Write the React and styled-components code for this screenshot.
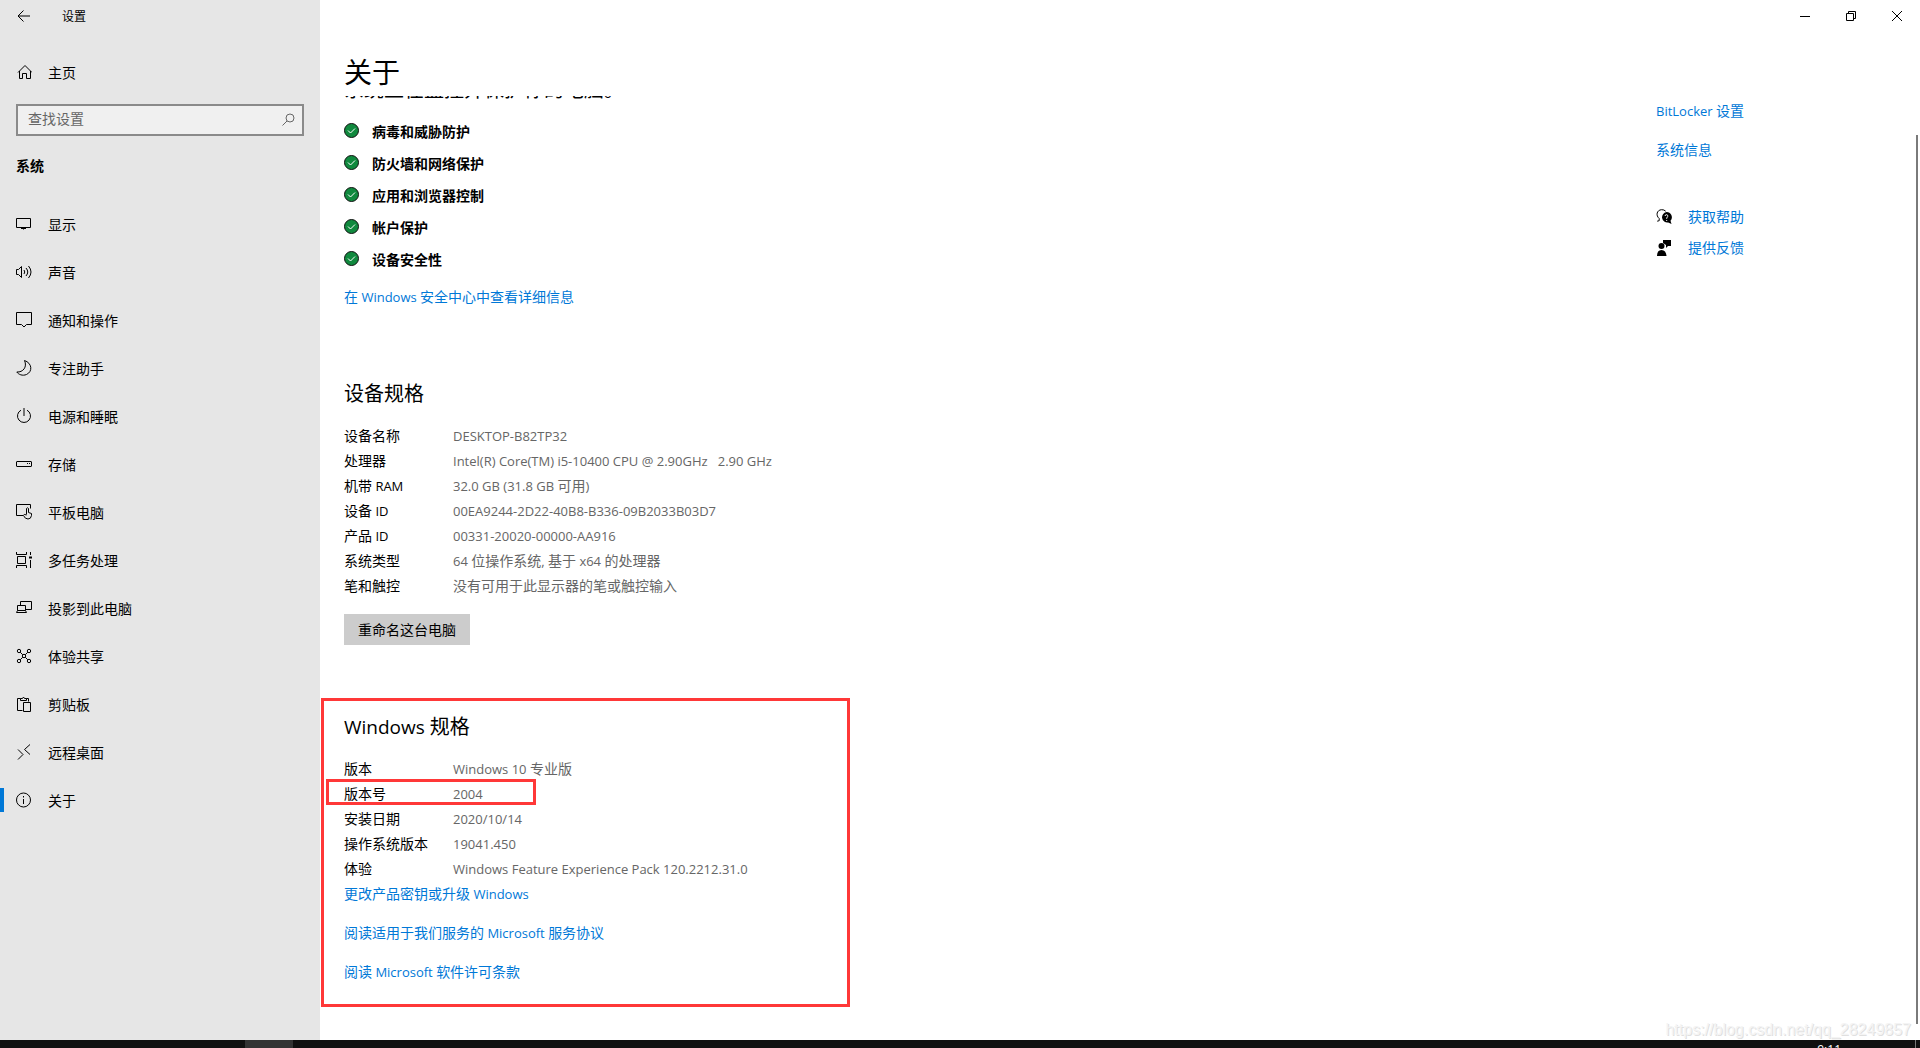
import React from "react";
import styled, { createGlobalStyle, css } from "styled-components";

const Global = createGlobalStyle`
  * { box-sizing: border-box; }
  body {
    margin: 0;
    overflow: hidden;
    background: #fff;
    color: #000;
    font: 14px/20px "Open Sans", "Noto Sans CJK SC", sans-serif;
  }
  h1, h2, p, ul, dl, dd { margin: 0; padding: 0; }
  ul { list-style: none; }
`;

const Screen = styled.div`
  height: 100vh;
  display: flex;
  flex-direction: column;
`;
const Window = styled.div`
  position: relative;
  flex: 1;
  min-height: 0;
  display: flex;
`;
const Sidebar = styled.aside`
  width: 320px;
  flex: none;
  background: #e6e6e6;
`;
const TitleBar = styled.div`
  height: 32px;
  display: flex;
  align-items: center;
  gap: 30px;
  padding-left: 16px;
  font-size: 12px;
`;
const IconButton = styled.button`
  display: flex;
  align-items: center;
  justify-content: center;
  width: ${(p) => p.$width || 16}px;
  height: ${(p) => p.$height || 28}px;
  padding: 0;
  border: 0;
  background: none;
  color: inherit;
`;
const Label = styled.span`
  padding-top: 2px;
`;
const NavLink = styled.a`
  display: flex;
  align-items: center;
  gap: 16px;
  height: 48px;
  padding-left: 16px;
  color: #000;
  text-decoration: none;
  ${(p) =>
    p.$current &&
    css`
      padding-left: 0;
      &::before {
        content: "";
        width: 4px;
        height: 24px;
        margin-right: -4px;
        background: #0078d7;
      }
    `}
`;
const HomeArea = styled.div`
  padding: 16px 0 8px;
`;
const SearchBox = styled.form`
  display: flex;
  align-items: center;
  height: 32px;
  margin: 0 16px;
  padding-right: 6px;
  border: 2px solid #8a8a8a;
  background: #f0f0f0;
  color: #666;
`;
const SearchInput = styled.input`
  flex: 1;
  min-width: 0;
  padding: 0 10px 2px;
  border: 0;
  outline: 0;
  background: none;
  font: inherit;
  &::placeholder { color: #666; opacity: 1; }
`;
const Category = styled.h2`
  padding: 20px 16px 24px;
  font-size: 14px;
  line-height: 20px;
  font-weight: 700;
`;
const Glyph = styled.svg`
  flex: none;
  display: block;
  width: 16px;
  height: 16px;
  fill: none;
  stroke: currentColor;
  stroke-width: 1;
`;

const Main = styled.main`
  flex: 1;
  min-width: 0;
  display: flex;
  flex-direction: column;
`;
const Caption = styled.div`
  height: 32px;
  display: flex;
  justify-content: flex-end;
`;
const PageTitle = styled.h1`
  height: 64px;
  padding: 20px 24px 0;
  font-size: 28px;
  line-height: 40px;
  font-weight: 400;
`;
const Scroller = styled.div`
  flex: 1;
  min-height: 0;
  overflow: hidden;
  display: flex;
  justify-content: space-between;
`;
const Content = styled.div`
  flex: 1;
  padding-left: 24px;
`;
const StatusLine = styled.p`
  margin-top: -20px;
  font-size: 20px;
  line-height: 28px;
`;
const Checks = styled.ul`
  padding: 11px 0 12px;
`;
const Check = styled.li`
  display: flex;
  align-items: center;
  gap: 12px;
  height: 32px;
  font-weight: 700;
`;
const Link = styled.a`
  color: #0078d7;
  text-decoration: none;
`;
const Section = styled.section`
  padding-top: 73px;
`;
const Latin = styled.span`
  font-size: 13px;
  line-height: 1;
`;
const Heading = styled.h2`
  font-size: 20px;
  line-height: 28px;
  font-weight: 400;
  ${Latin} { font-size: 19px; }
`;
const Specs = styled.dl`
  padding-top: 15px;
`;
const Spec = styled.div`
  display: grid;
  grid-template-columns: 109px 1fr;
  align-items: center;
  height: 25px;
`;
const Value = styled.dd`
  color: #666;
  white-space: pre;
`;
const RenameButton = styled.button`
  display: block;
  height: 31px;
  margin-top: 16px;
  padding: 0 14px;
  border: 0;
  background: #ccc;
  color: #000;
  font: inherit;
`;
const Highlight = styled.div`
  width: 529px;
  margin: 53px 0 0 -23px;
  padding: 12px 20px 22px;
  border: 3px solid #ff3838;
`;
const RowMark = styled.span`
  position: absolute;
  top: -2px;
  left: -18px;
  width: 210px;
  height: 26px;
  border: 3px solid #ff3838;
`;
const MarkedSpec = styled(Spec)`
  position: relative;
`;
const Links = styled.div`
  display: flex;
  flex-direction: column;
  align-items: flex-start;
  gap: 19px;
  padding-top: ${(p) => p.$top || 0}px;
`;
const Aside = styled.aside`
  width: 264px;
  flex: none;
  padding-top: 5px;
`;
const HelpList = styled.div`
  display: flex;
  flex-direction: column;
  gap: 11px;
  padding-top: 47px;
`;
const HelpLink = styled(Link)`
  display: flex;
  align-items: center;
  gap: 16px;
  svg { color: #000; }
`;
const ScrollThumb = styled.div`
  position: absolute;
  top: 135px;
  right: 2px;
  bottom: 16px;
  width: 2px;
  background: #7a7a7a;
`;
const Watermark = styled.div`
  position: absolute;
  right: 9px;
  bottom: 0;
  color: #f4f4f4;
  text-shadow: 1px 1px 0 #e0e0e0;
  font: 16px/20px "Liberation Sans", sans-serif;
`;
const Taskbar = styled.footer`
  flex: none;
  height: 8px;
  display: flex;
  justify-content: space-between;
  overflow: hidden;
  background: #101010;
  color: #fff;
`;
const TaskItem = styled.div`
  width: 48px;
  margin-left: 245px;
  background: #333;
`;
const Tray = styled.div`
  display: flex;
  gap: 74px;
  padding-right: 4px;
  font-size: 12px;
  line-height: 20px;
`;
const Divider = styled.span`
  width: 1px;
  height: 8px;
  background: #777;
`;

const icons = {
  back: <path d="M2 8h12M7.5 2.5 2 8l5.500 5.500" />,
  home: <path d="M2 8.500 9 1.500l7 7M3.500 7v7.500h3v-5h4v5h4V7" />,
  search: <><circle cx="10" cy="6" r="4" /><path d="M7 9 2.500 13.500" /></>,
  display: <path d="M.5 2.500h14v9H.5zM7.500 11.500v2M5 12.500h5" />,
  sound: <path d="M.5 5.500v5h2l3 3v-11l-3 3zM8 6q1.500 2 0 4M10 4q3.500 4 0 8M12.500 2q5 6 0 12" />,
  message: <path d="M.5.5h15v12h-5L8 15l-2.500-2.500h-5z" />,
  moon: <path d="M8.500.5C16 3 17 11.500 10.500 14.500 6.500 16.200 2.500 14.500.8 12 7 12.500 11.500 7 8.500.5z" />,
  power: <path d="M8 0v8M5 2.200a6.500 6.500 0 1 0 6 0" />,
  storage: <><rect x=".5" y="5.500" width="15" height="5" rx=".5" /><path d="M11 7.500h1M13 7.500h1" /></>,
  tablet: <path d="M7 11.500H.5V.5h14v4M10.500 10.500v-6q1-1.500 2 0v4l3 1v2q-.5 3.500-3.500 3.500-3 0-4.500-3.500 0-2 3-.5" />,
  tasks: <><path d="M.5 0v2.500h10V0M.5 16v-2.500h10V16M1.500 4.500h8v7h-8zM14.500 0v3M14.500 8v8" /><path d="M13 4.500h3v2h-3z" fill="currentColor" stroke="none" /></>,
  project: <path d="M4.500 5.500v-4h11v8h-6M1.500 5.500h8v5h-8zM1.500 10.500l-1 2h10l-1-2" />,
  share: <><circle cx="3" cy="3" r="1.700" /><circle cx="13" cy="3" r="1.700" /><circle cx="3" cy="13" r="1.700" /><circle cx="13" cy="13" r="1.700" /><circle cx="8" cy="8" r="1.700" /><path d="m4.200 4.200 2.600 2.600M11.800 4.200 9.200 6.800M4.200 11.800l2.600-2.600M11.800 11.800 9.200 9.200" /></>,
  clipboard: <path d="M6.500 14.500h-5v-12h3v2h6v-2h2v3M4.500 2.500h2q1-3 2 0h2M7.500 6.500h7v9h-7z" />,
  remote: <path d="M2 5.500 7 10.500l-5 5M14 .5 8.500 5.500l5.500 5" />,
  info: <><circle cx="7.500" cy="8" r="7" /><path d="M7.500 7v5M7.500 4v1.500" /></>,
  minimize: <path d="M3 8.500h10" />,
  restore: <path d="M3.500 5.500h7v7h-7zM5.500 5.500v-2h7v7h-2" />,
  close: <path d="m3 3 10 10M13 3 3 13" />,
  help: <><path d="M3.200 9.500C-.5 6.500.8 1 5.500.7q2.500-.2 4.200 1.500M3.200 9.500v2.200l-2 .5" /><path d="M10.500 3a5.300 5.300 0 1 0 1.700 10.500l3.300 1.500-1-3.200A5.300 5.300 0 0 0 10.500 3z" fill="currentColor" stroke="none" /><path d="M9 7q.3-1.500 1.700-1.300Q12.200 6 11.700 7.500L10.700 9v.8M10.700 11v1" stroke="#fff" /></>,
  feedback: <g fill="currentColor" stroke="none"><path d="M7 0h8v6h-3l-2 2V5L7 3z" /><circle cx="5.500" cy="6" r="3" /><path d="M1 16q0-6 4.500-6t5 6z" /></g>,
  ok: <><circle cx="7.500" cy="7.500" r="7" fill="#10893e" stroke="#111" /><path d="M4 7.500 6.500 10 11 5.500" stroke="#fff" /></>,
};
const Icon = ({ name }) => (
  <Glyph viewBox="0 0 16 16" aria-hidden="true">{icons[name]}</Glyph>
);

const nav = [
  ["display", "显示"], ["sound", "声音"], ["message", "通知和操作"], ["moon", "专注助手"],
  ["power", "电源和睡眠"], ["storage", "存储"], ["tablet", "平板电脑"], ["tasks", "多任务处理"],
  ["project", "投影到此电脑"], ["share", "体验共享"], ["clipboard", "剪贴板"],
  ["remote", "远程桌面"], ["info", "关于"],
];
const checks = ["病毒和威胁防护", "防火墙和网络保护", "应用和浏览器控制", "帐户保护", "设备安全性"];
const device = [
  ["设备名称", "DESKTOP-B82TP32"],
  ["处理器", "Intel(R) Core(TM) i5-10400 CPU @ 2.90GHz   2.90 GHz"],
  ["机带 RAM", "32.0 GB (31.8 GB 可用)"],
  ["设备 ID", "00EA9244-2D22-40B8-B336-09B2033B03D7"],
  ["产品 ID", "00331-20020-00000-AA916"],
  ["系统类型", "64 位操作系统, 基于 x64 的处理器"],
  ["笔和触控", "没有可用于此显示器的笔或触控输入"],
];
const windowsSpecs = [
  ["版本", "Windows 10 专业版"],
  ["版本号", "2004", true],
  ["安装日期", "2020/10/14"],
  ["操作系统版本", "19041.450"],
  ["体验", "Windows Feature Experience Pack 120.2212.31.0"],
];

/* Latin runs are set one size below the Chinese text around them. */
const Mixed = ({ children }) =>
  children.split(/([\x20-\x7e]+)/).filter(Boolean).map((run, i) =>
    /^[\x20-\x7e]/.test(run) ? <Latin key={i}>{run}</Latin> : run
  );

const SpecList = ({ rows }) => (
  <Specs>
    {rows.map(([label, value, marked]) => {
      const Row = marked ? MarkedSpec : Spec;
      return (
        <Row key={label}>
          <dt><Mixed>{label}</Mixed></dt>
          <Value><Mixed>{value}</Mixed>{marked && <RowMark />}</Value>
        </Row>
      );
    })}
  </Specs>
);

export default function App() {
  return (
    <Screen>
      <Global />
      <Window>
        <Sidebar>
          <TitleBar>
            <IconButton aria-label="返回"><Icon name="back" /></IconButton>
            <Label>设置</Label>
          </TitleBar>
          <HomeArea>
            <NavLink href="#home"><Icon name="home" /><Label>主页</Label></NavLink>
          </HomeArea>
          <SearchBox>
            <SearchInput aria-label="查找设置" placeholder="查找设置" />
            <IconButton type="button" aria-label="搜索"><Icon name="search" /></IconButton>
          </SearchBox>
          <Category>系统</Category>
          <nav>
            {nav.map(([icon, label]) => (
              <NavLink key={icon} href={"#" + icon} $current={icon === "info"}>
                <Icon name={icon} /><Label>{label}</Label>
              </NavLink>
            ))}
          </nav>
        </Sidebar>
        <Main>
          <Caption>
            <IconButton $width={46} $height={32} aria-label="最小化"><Icon name="minimize" /></IconButton>
            <IconButton $width={46} $height={32} aria-label="还原"><Icon name="restore" /></IconButton>
            <IconButton $width={46} $height={32} aria-label="关闭"><Icon name="close" /></IconButton>
          </Caption>
          <PageTitle>关于</PageTitle>
          <Scroller>
            <Content>
              <StatusLine>系统正在监控并保护你的电脑。</StatusLine>
              <Checks>
                {checks.map((c) => <Check key={c}><Icon name="ok" /><Label>{c}</Label></Check>)}
              </Checks>
              <Links>
                <Link href="#security"><Mixed>在 Windows 安全中心中查看详细信息</Mixed></Link>
              </Links>
              <Section>
                <Heading>设备规格</Heading>
                <SpecList rows={device} />
                <RenameButton>重命名这台电脑</RenameButton>
              </Section>
              <Highlight>
                <Heading><Mixed>Windows 规格</Mixed></Heading>
                <SpecList rows={windowsSpecs} />
                <Links $top={3}>
                  <Link href="#key"><Mixed>更改产品密钥或升级 Windows</Mixed></Link>
                  <Link href="#services"><Mixed>阅读适用于我们服务的 Microsoft 服务协议</Mixed></Link>
                  <Link href="#license"><Mixed>阅读 Microsoft 软件许可条款</Mixed></Link>
                </Links>
              </Highlight>
            </Content>
            <Aside>
              <Links>
                <Link href="#bitlocker"><Mixed>BitLocker 设置</Mixed></Link>
                <Link href="#sysinfo">系统信息</Link>
              </Links>
              <HelpList>
                <HelpLink href="#help"><Icon name="help" />获取帮助</HelpLink>
                <HelpLink href="#feedback"><Icon name="feedback" />提供反馈</HelpLink>
              </HelpList>
            </Aside>
          </Scroller>
        </Main>
        <ScrollThumb />
        <Watermark>https://blog.csdn.net/qq_28249857</Watermark>
      </Window>
      <Taskbar>
        <TaskItem />
        <Tray><span>9:11</span><Divider /></Tray>
      </Taskbar>
    </Screen>
  );
}
